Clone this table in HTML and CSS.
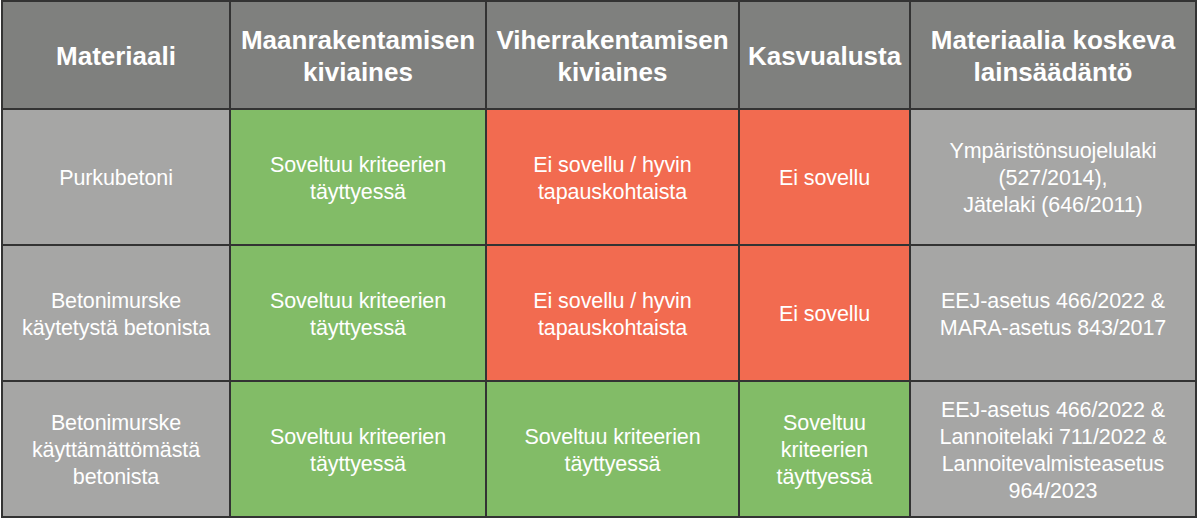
FILE: index.html
```html
<!DOCTYPE html>
<html lang="fi">
<head>
<meta charset="utf-8">
<link rel="stylesheet" href="styles.css">
</head>
<body>
<div class="table">
  <div class="cell head">Materiaali</div>
  <div class="cell head">Maanrakentamisen<br>kiviaines</div>
  <div class="cell head">Viherrakentamisen<br>kiviaines</div>
  <div class="cell head">Kasvualusta</div>
  <div class="cell head">Materiaalia koskeva<br>lainsäädäntö</div>

  <div class="cell grey">Purkubetoni</div>
  <div class="cell green">Soveltuu kriteerien<br>täyttyessä</div>
  <div class="cell red">Ei sovellu / hyvin<br>tapauskohtaista</div>
  <div class="cell red">Ei sovellu</div>
  <div class="cell grey">Ympäristönsuojelulaki<br>(527/2014),<br>Jätelaki (646/2011)</div>

  <div class="cell grey">Betonimurske<br>käytetystä betonista</div>
  <div class="cell green">Soveltuu kriteerien<br>täyttyessä</div>
  <div class="cell red">Ei sovellu / hyvin<br>tapauskohtaista</div>
  <div class="cell red">Ei sovellu</div>
  <div class="cell grey">EEJ-asetus 466/2022 &amp;<br>MARA-asetus 843/2017</div>

  <div class="cell grey">Betonimurske<br>käyttämättömästä<br>betonista</div>
  <div class="cell green">Soveltuu kriteerien<br>täyttyessä</div>
  <div class="cell green">Soveltuu kriteerien<br>täyttyessä</div>
  <div class="cell green">Soveltuu<br>kriteerien<br>täyttyessä</div>
  <div class="cell grey">EEJ-asetus 466/2022 &amp;<br>Lannoitelaki 711/2022 &amp;<br>Lannoitevalmisteasetus<br>964/2023</div>
</div>
</body>
</html>
```
FILE: styles.css
```css
html, body {
  margin: 0;
  padding: 0;
  background: #ffffff;
}
body {
  font-family: "Liberation Sans", Arial, sans-serif;
}
.table {
  margin-left: 1px;
  width: 1196px;
  box-sizing: border-box;
  display: grid;
  grid-template-columns: 226px 254px 251px 169px 284px;
  grid-template-rows: 106px 134px 134px 134px;
  gap: 2px;
  padding: 2px;
  background: #333333;
}
.cell {
  display: flex;
  align-items: center;
  justify-content: center;
  text-align: center;
  color: #ffffff;
  font-size: 21.5px;
  line-height: 27px;
  letter-spacing: -0.1px;
  padding-top: 3px;
}
.head {
  background: #7f807e;
  font-weight: bold;
  font-size: 26px;
  line-height: 32px;
  letter-spacing: 0;
  padding-top: 2px;
}
.grey { background: #a6a6a5; }
.green { background: #82bc67; }
.red { background: #f26b50; }
```
